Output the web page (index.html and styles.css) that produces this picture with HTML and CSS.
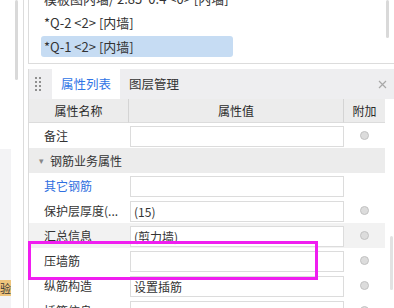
FILE: index.html
```html
<!DOCTYPE html>
<html>
<head>
  <title>属性列表</title>
  <link rel="stylesheet" href="styles.css">
</head>
<body>
  <div class="side">
    <div class="dock">
      <div class="dock-top"></div>
      <div class="dock-bar"><span class="badge">验</span></div>
    </div>
    <div class="side-track"><div class="thumb side-thumb"></div></div>
  </div>

  <div class="main">
    <div class="top-panel">
      <ul class="list">
        <li class="item">模板图内墙/ 2.85*0.4 &lt;0&gt; [内墙]</li>
        <li class="item">*Q-2 &lt;2&gt; [内墙]</li>
        <li class="item selected">*Q-1 &lt;2&gt; [内墙]</li>
      </ul>
      <div class="top-track"><div class="thumb top-thumb"></div></div>
    </div>

    <div class="prop-panel">
      <div class="prop-head">
        <div class="grip">
          <i></i><i></i><i></i><i></i><i></i><i></i><i></i><i></i>
        </div>
        <div class="tab active">属性列表</div>
        <div class="tab">图层管理</div>
        <svg class="close" width="9" height="9" viewBox="0 0 9 9">
          <path d="M1 1L8 8M8 1L1 8" stroke="#a8a8a8" stroke-width="1.2" fill="none"/>
        </svg>
      </div>

      <div class="prop-body">
        <div class="grid">
          <div class="th">属性名称</div>
          <div class="th">属性值</div>
          <div class="th last">附加</div>

          <div class="td name">备注</div>
          <div class="td value"><div class="box"></div></div>
          <div class="td extra"><span class="radio"></span></div>

          <div class="group"><span class="caret">&#9662;</span>钢筋业务属性</div>

          <div class="td name link">其它钢筋</div>
          <div class="td value"><div class="box"></div></div>
          <div class="td extra"></div>

          <div class="td name">保护层厚度(...</div>
          <div class="td value"><div class="box">(15)</div></div>
          <div class="td extra"><span class="radio"></span></div>

          <div class="td name hover">汇总信息</div>
          <div class="td value hover"><div class="box">(剪力墙)</div></div>
          <div class="td extra hover"><span class="radio"></span></div>

          <div class="td name">压墙筋</div>
          <div class="td value"><div class="box"></div></div>
          <div class="td extra"><span class="radio"></span></div>

          <div class="td name">纵筋构造</div>
          <div class="td value"><div class="box">设置插筋</div></div>
          <div class="td extra"><span class="radio"></span></div>

          <div class="td name">插筋信息</div>
          <div class="td value"><div class="box"></div></div>
          <div class="td extra"><span class="radio"></span></div>
        </div>
        <div class="body-track"><div class="thumb body-thumb"></div></div>
      </div>
    </div>
  </div>

  <div class="mark"></div>
</body>
</html>
```

FILE: styles.css
```css
body {
  margin: 0;
  width: 394px;
  height: 308px;
  overflow: hidden;
  display: flex;
  background: #fff;
  font-family: "Noto Sans CJK SC", "Noto Sans", sans-serif;
  font-size: 12px;
  color: #333;
}

/* left dock strip */
.side {
  width: 23px;
  border-right: 1px solid #dcdcdc;
  display: flex;
  flex-shrink: 0;
}
.dock {
  width: 11px;
  display: flex;
  flex-direction: column;
}
.dock-top {
  height: 149px;
  flex-shrink: 0;
}
.dock-bar {
  flex: 1;
  background: #f3f3f5;
  display: flex;
  flex-direction: column;
  justify-content: flex-end;
  padding-bottom: 12px;
}
.badge {
  height: 16px;
  background: #eec47c;
  color: #333;
  font-size: 11px;
  line-height: 16px;
  overflow: hidden;
  display: flex;
  justify-content: flex-end;
}
.side-track {
  padding-left: 4px;
}
.thumb {
  width: 3px;
  background: #d9d9d9;
  border-radius: 2px;
}
.side-thumb {
  height: 80px;
}

.main {
  flex: 1;
  margin-left: 4px;
  display: flex;
  flex-direction: column;
  min-height: 0;
}

/* component list */
.top-panel {
  height: 63px;
  flex-shrink: 0;
  border-left: 1px solid #dcdcdc;
  border-bottom: 1px solid #dcdcdc;
  display: flex;
  overflow: hidden;
}
.list {
  list-style: none;
  margin: -12px 0 0;
  padding: 0 0 0 12px;
  flex: 1;
}
.item {
  height: 21px;
  margin-bottom: 3px;
  width: 189px;
  padding-left: 3px;
  line-height: 21px;
  font-size: 13px;
  border-radius: 3px;
  white-space: nowrap;
}
.item.selected {
  background: #c6dcf3;
}
.top-track {
  width: 8px;
  padding-left: 1px;
}
.top-thumb {
  height: 38px;
}

/* property panel */
.prop-panel {
  margin-top: 5px;
  flex: 1;
  min-height: 0;
  overflow: hidden;
  border-left: 1px solid #dcdcdc;
  display: flex;
  flex-direction: column;
}
.prop-head {
  height: 30px;
  flex-shrink: 0;
  background: #eeeef0;
  display: flex;
  align-items: center;
}
.grip {
  width: 6px;
  margin: 0 11px 0 6px;
  display: grid;
  grid-template-columns: 2px 2px;
  column-gap: 2px;
  row-gap: 2px;
}
.grip i {
  width: 2px;
  height: 2px;
  background: #8f8f8f;
}
.tab {
  width: 68px;
  height: 30px;
  line-height: 30px;
  text-align: center;
  font-size: 12.5px;
  color: #333;
}
.tab.active {
  background: #fff;
  color: #2f74e6;
}
.close {
  margin-left: auto;
  margin-right: 7px;
}

.prop-body {
  flex-shrink: 0;
  display: flex;
}
.grid {
  width: 356px;
  display: grid;
  grid-template-columns: 100px 215px 41px;
  grid-template-rows: 24px;
  grid-auto-rows: 25px;
  align-content: start;
}
.th {
  line-height: 23px;
  background: #ececec;
  border-right: 1px solid #d4d4d4;
  border-bottom: 1px solid #dcdcdc;
  text-align: center;
  color: #2a2a2a;
}
.th.last {
  border-right: none;
}
.td {
  display: flex;
  align-items: center;
}
.name {
  padding-left: 15px;
  white-space: nowrap;
}
.link {
  color: #2f6fe0;
}
.value {
  padding: 3px 0 1px 1px;
  align-items: stretch;
}
.box {
  flex: 1;
  border: 1px solid #dcdcdc;
  background: #fff;
  padding-left: 3px;
  line-height: 19px;
}
.extra {
  justify-content: center;
}
.radio {
  width: 7px;
  height: 7px;
  border-radius: 50%;
  background: #dcdcdc;
  border: 1px solid #c2c2c2;
}
.hover {
  background: #f2f2f2;
}
.group {
  grid-column: 1 / 4;
  background: #ececec;
  display: flex;
  align-items: center;
  padding-left: 10px;
}
.caret {
  font-size: 9px;
  color: #888;
  margin-right: 6px;
}
.body-track {
  padding: 137px 0 0 5px;
}
.body-thumb {
  height: 54px;
  background: #e2e2e2;
}

/* annotation frame */
.mark {
  position: absolute;
  left: 28px;
  top: 241px;
  width: 290px;
  height: 39px;
  box-sizing: border-box;
  border: 3px solid #f01ef0;
}
```
